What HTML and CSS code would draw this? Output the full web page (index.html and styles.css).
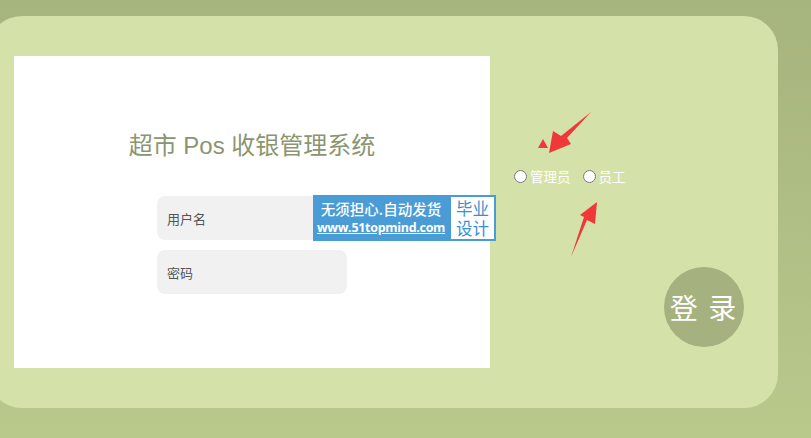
FILE: index.html
```html
<!DOCTYPE html>
<html lang="zh">
<head>
<meta charset="utf-8">
<title>超市 Pos 收银管理系统</title>
<link rel="stylesheet" href="styles.css">
</head>
<body>
<div class="card">
  <div class="panel">
    <h1 class="title">超市 Pos 收银管理系统</h1>
    <div class="fields">
      <input class="field" type="text" placeholder="用户名">
      <input class="field" type="password" placeholder="密码">
    </div>
    <div class="watermark">
      <div class="wm-left">
        <span class="wm-line1">无须担心.自动发货</span>
        <span class="wm-line2">www.51topmind.com</span>
      </div>
      <div class="wm-right"><span>毕业</span><span>设计</span></div>
    </div>
  </div>
  <div class="side">
    <div class="roles">
      <label class="role"><input type="radio" name="role"><span>管理员</span></label>
      <label class="role"><input type="radio" name="role"><span>员工</span></label>
    </div>
    <button class="login">登 录</button>
  </div>
</div>
<svg class="arrows" width="811" height="438" viewBox="0 0 811 438">
  <polygon fill="#f0383a" points="591,112 567,138 571,144 549,153 553,131 561,136"/>
  <polygon fill="#f0383a" points="538,148 548,148 543,139"/>
  <polygon fill="#f0383a" points="571,257 587,220 595,224 597,202 580,215 584,217"/>
</svg>
</body>
</html>
```
FILE: styles.css
```css
html, body {
  margin: 0;
  padding: 0;
}
body {
  width: 811px;
  height: 438px;
  overflow: hidden;
  background: linear-gradient(#a6b47d, #b9c98c);
  font-family: "Liberation Sans", "Noto Sans CJK SC", sans-serif;
  position: relative;
}
.card {
  margin: 16px 0 0 -12px;
  width: 790px;
  height: 392px;
  box-sizing: border-box;
  background: #d4e2aa;
  border-radius: 34px;
  padding: 40px 0 0 26px;
  display: flex;
}
.panel {
  width: 476px;
  height: 312px;
  background: #fff;
  position: relative;
  display: flex;
  flex-direction: column;
  align-items: center;
}
.title {
  margin: 75px 0 0;
  font-weight: normal;
  font-size: 24px;
  line-height: 30px;
  color: #8a9571;
}
.fields {
  margin-top: 35px;
  display: flex;
  flex-direction: column;
  gap: 10px;
}
.field {
  width: 190px;
  height: 44px;
  box-sizing: border-box;
  border: none;
  border-radius: 8px;
  background: #f1f1f1;
  padding: 0 10px;
  font-family: "Noto Sans CJK SC", sans-serif;
  font-size: 13px;
  outline: none;
}
.field::placeholder {
  color: #555;
}
.watermark {
  position: absolute;
  left: 299px;
  top: 139px;
  display: flex;
  height: 46px;
  font-family: "Noto Sans CJK SC", sans-serif;
}
.wm-left {
  width: 136px;
  background: #4a9cd6;
  color: #fff;
  display: flex;
  flex-direction: column;
  align-items: center;
  justify-content: center;
}
.wm-line1 {
  font-size: 14.5px;
  line-height: 20px;
  font-weight: 500;
}
.wm-line2 {
  font-size: 12.5px;
  line-height: 18px;
  font-weight: 700;
  text-decoration: underline;
  font-family: "Open Sans", sans-serif;
  letter-spacing: -0.3px;
}
.wm-right {
  width: 47px;
  box-sizing: border-box;
  border: 2px solid #4a9cd6;
  background: #fff;
  color: #3b8fd1;
  display: flex;
  flex-direction: column;
  align-items: center;
  justify-content: center;
  font-size: 16.5px;
  line-height: 20px;
}
.side {
  flex: 1;
  display: flex;
  flex-direction: column;
  padding: 111px 34px 0 24px;
}
.roles {
  display: flex;
  gap: 12px;
  font-family: "Noto Sans CJK SC", sans-serif;
  font-size: 13.5px;
  color: #fff;
}
.role {
  display: flex;
  align-items: center;
  gap: 3px;
  line-height: 18px;
}
.role input {
  margin: 0;
  width: 13px;
  height: 13px;
}
.login {
  align-self: flex-end;
  margin-top: 82px;
  width: 80px;
  height: 80px;
  border-radius: 50%;
  border: none;
  background: #a5b17f;
  color: #fff;
  font-family: "Noto Sans CJK SC", sans-serif;
  font-size: 28px;
  padding: 0;
  letter-spacing: 2px;
}
.arrows {
  position: absolute;
  left: 0;
  top: 0;
  pointer-events: none;
}
```
